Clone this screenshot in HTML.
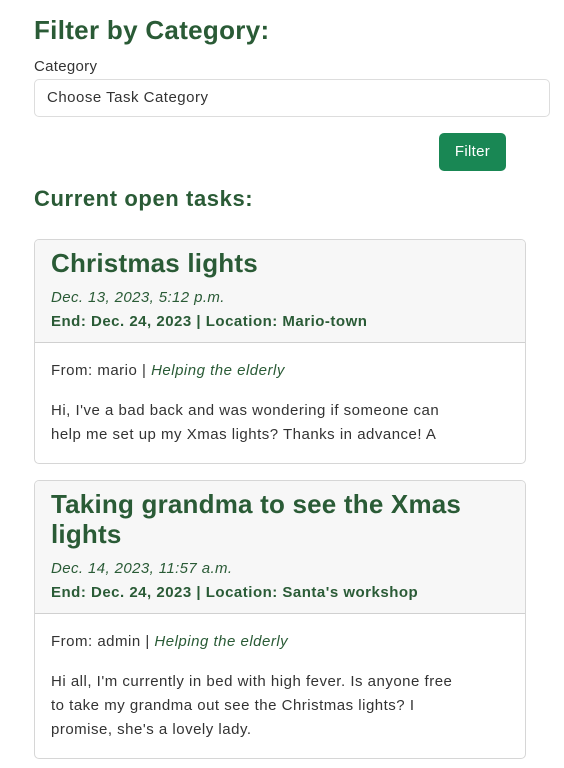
<!DOCTYPE html>
<html><head><style>
body{margin:0;background:#fff;font-family:"Liberation Sans",sans-serif;color:#333;}
.g{color:#2a5b36;}
.abs{position:absolute;}
h1{position:absolute;left:34px;top:15px;margin:0;font-size:26px;font-weight:bold;color:#2a5b36;letter-spacing:0.3px;}
.card{position:absolute;left:34px;width:490px;border:1px solid #d6d6d6;border-radius:5px;overflow:hidden;}
.hd{background:#f7f7f7;border-bottom:1px solid #d0d0d0;position:relative;}
.t{font-size:26px;font-weight:bold;color:#2a5b36;line-height:30px;letter-spacing:0.2px;}
.d{font-size:15px;font-style:italic;color:#2a5b36;letter-spacing:0.4px;}
.e{font-size:15px;font-weight:bold;color:#2a5b36;letter-spacing:0.5px;}
.b{font-size:15px;line-height:24px;color:#333;letter-spacing:0.5px;white-space:nowrap;}
</style></head><body>
<h1>Filter by Category:</h1>
<div class="abs" style="left:34px;top:58px;font-size:15px;letter-spacing:0.3px;">Category</div>
<div class="abs" style="left:34px;top:79px;width:514px;height:36px;border:1px solid #ddd;border-radius:5px;"><div style="padding:9px 0 0 12px;font-size:15px;letter-spacing:0.5px;">Choose Task Category</div></div>
<div class="abs" style="left:439px;top:133px;width:67px;height:38px;background:#198754;border-radius:5px;color:#fff;font-size:15px;text-align:center;line-height:38px;letter-spacing:0.3px;">Filter</div>
<div class="abs" style="left:34px;top:186px;font-size:22px;font-weight:bold;color:#2a5b36;letter-spacing:0.6px;">Current open tasks:</div>

<div class="card" style="top:239px;height:223px;">
 <div class="hd" style="height:102px;">
  <div class="abs t" style="left:16px;top:8px;">Christmas lights</div>
  <div class="abs d" style="left:16px;top:49px;">Dec. 13, 2023, 5:12 p.m.</div>
  <div class="abs e" style="left:16px;top:73px;">End: Dec. 24, 2023 | Location: Mario-town</div>
 </div>
 <div class="abs b" style="left:16px;top:119px;">From: mario | <i class="g">Helping the elderly</i></div>
 <div class="abs b" style="left:16px;top:159px;">Hi, I've a bad back and was wondering if someone can<br>help me set up my Xmas lights? Thanks in advance! A</div>
</div>

<div class="card" style="top:480px;height:277px;">
 <div class="hd" style="height:132px;">
  <div class="abs t" style="left:16px;top:8px;width:460px;">Taking grandma to see the Xmas lights</div>
  <div class="abs d" style="left:16px;top:79px;">Dec. 14, 2023, 11:57 a.m.</div>
  <div class="abs e" style="left:16px;top:103px;">End: Dec. 24, 2023 | Location: Santa's workshop</div>
 </div>
 <div class="abs b" style="left:16px;top:149px;">From: admin | <i class="g">Helping the elderly</i></div>
 <div class="abs b" style="left:16px;top:189px;">Hi all, I'm currently in bed with high fever. Is anyone free<br>to take my grandma out see the Christmas lights? I<br>promise, she's a lovely lady.</div>
</div>
</body></html>
